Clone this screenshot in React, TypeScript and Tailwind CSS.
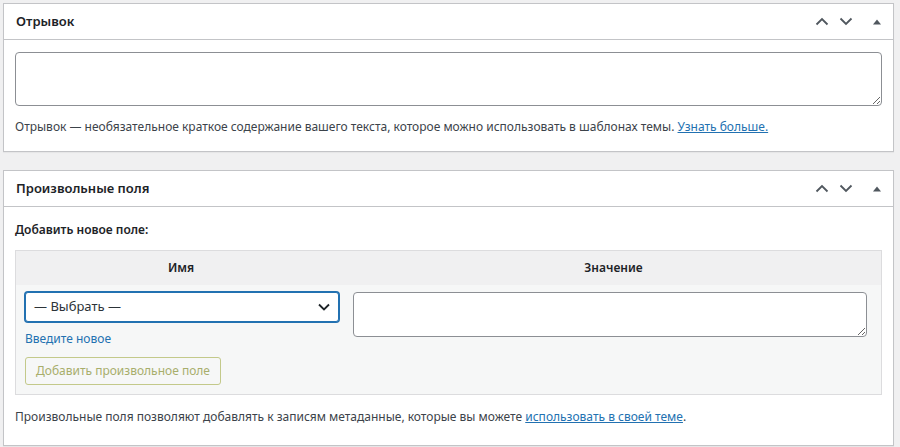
import React from 'react';

const font = { fontFamily: '"Noto Sans", "Liberation Sans", sans-serif' };

const HeaderControls: React.FC = () => (
  <div className="flex items-center text-[#50575e]">
    <button className="w-[24px] h-[36px] flex items-center justify-center">
      <svg width="14" height="9" viewBox="0 0 14 9" fill="none" stroke="currentColor" strokeWidth="1.8">
        <path d="M1.5 7.5 L7 2 L12.5 7.5" />
      </svg>
    </button>
    <button className="w-[24px] h-[36px] mr-[3px] flex items-center justify-center">
      <svg width="14" height="9" viewBox="0 0 14 9" fill="none" stroke="currentColor" strokeWidth="1.8">
        <path d="M1.5 1.5 L7 7 L12.5 1.5" />
      </svg>
    </button>
    <button className="w-[32px] h-[36px] flex items-center justify-center">
      <svg width="8" height="6" viewBox="0 0 8 6" fill="currentColor">
        <path d="M0 5.5 L4 0.5 L8 5.5 Z" />
      </svg>
    </button>
  </div>
);

const Postbox: React.FC<{ title: string; children: React.ReactNode }> = ({ title, children }) => (
  <div className="bg-white border border-[#c3c4c7] shadow-[0_1px_1px_rgba(0,0,0,0.04)]">
    <div className="h-[36px] flex items-center justify-between border-b border-[#c3c4c7] pl-[12px]">
      <h2 className="text-[13px] font-semibold text-[#1d2327]">{title}</h2>
      <HeaderControls />
    </div>
    <div className="px-[11px]">{children}</div>
  </div>
);

export default function App() {
  return (
    <div className="bg-[#f0f0f1] min-h-[447px] pt-[3px] pl-[3px] pr-[6px] text-[12px] text-[#3c434a]" style={font}>
      <Postbox title="Отрывок">
        <div className="pt-[12px]">
          <textarea className="block w-full h-[54px] border border-[#8c8f94] rounded-[4px] px-2 py-1 outline-none resize-y" />
        </div>
        <p className="pt-[11px] pb-[14px] leading-[20px] text-[#3c434a]">
          Отрывок — необязательное краткое содержание вашего текста, которое можно использовать в шаблонах темы.{' '}
          <a className="text-[#2271b1] underline">Узнать больше.</a>
        </p>
      </Postbox>

      <div className="h-[18px]" />

      <Postbox title="Произвольные поля">
        <p className="pt-[13px] pb-[10px] font-semibold text-[#1d2327] leading-[20px]">Добавить новое поле:</p>
        <div className="border border-[#dcdcde] bg-[#f6f7f7]">
          <div className="flex bg-[#f0f0f1] h-[34px] items-center font-semibold text-[#1d2327]">
            <div className="w-[330px] text-center">Имя</div>
            <div className="flex-1 text-center">Значение</div>
          </div>
          <div className="flex pt-[7px] pb-[9px]">
            <div className="w-[330px] pl-[9px] pr-[7px]">
              <div className="h-[30px] border border-[#2271b1] shadow-[0_0_0_1px_#2271b1] rounded-[3px] bg-white flex items-center justify-between pl-[8px] pr-[8px] text-[#2c3338] text-[13px]">
                <span>— Выбрать —</span>
                <svg width="12" height="8" viewBox="0 0 12 8" fill="none" stroke="#1d2327" strokeWidth="1.8">
                  <path d="M1 1.5 L6 6.5 L11 1.5" />
                </svg>
              </div>
              <a className="block mt-[8px] text-[#2271b1] leading-[18px]">Введите новое</a>
              <button className="mt-[9px] h-[28px] px-[10px] border border-[#c3c98a] rounded-[3px] bg-[#f6f7f7] text-[#a8ae6c] text-[12px]">
                Добавить произвольное поле
              </button>
            </div>
            <div className="flex-1 pl-[7px] pr-[14px]">
              <textarea className="block w-full h-[45px] border border-[#8c8f94] rounded-[4px] bg-white outline-none resize-y" />
            </div>
          </div>
        </div>
        <p className="pt-[12px] pb-[18px] leading-[20px] text-[#3c434a]">
          Произвольные поля позволяют добавлять к записям метаданные, которые вы можете{' '}
          <a className="text-[#2271b1] underline">использовать в своей теме</a>.
        </p>
      </Postbox>
    </div>
  );
}
